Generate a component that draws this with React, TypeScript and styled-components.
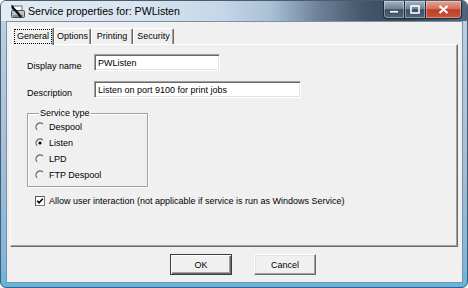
import React from 'react';
import styled, { createGlobalStyle } from 'styled-components';

const GlobalStyle = createGlobalStyle`
  html, body {
    margin: 0;
    padding: 0;
  }
  body {
    width: 468px;
    height: 288px;
    overflow: hidden;
    background: #ffffff;
    font-family: "Liberation Sans", Arial, sans-serif;
  }
`;

// Aero glass frame
const Window = styled.div`
  box-sizing: border-box;
  width: 468px;
  height: 288px;
  display: flex;
  flex-direction: column;
  border: 1px solid #4a5c6e;
  border-radius: 6px;
  overflow: hidden;
  background: linear-gradient(180deg, #bcd2e6 0%, #a2bfd9 55%, #80b6dc 92%, #5cb6e4 100%);
`;

const TitleBar = styled.div`
  height: 20px;
  display: flex;
  align-items: flex-start;
  background: linear-gradient(90deg, #e3ebf3 0%, #d8e4ef 30%, #c3d6e8 48%, #a9bfd4 58%, #6d8299 68%, #43566b 78%, #37475a 88%, #4e6781 100%);
`;

const AppIcon = styled.svg`
  width: 16px;
  height: 16px;
  margin: 3px 2px 0 9px;
  flex-shrink: 0;
`;

const Title = styled.div`
  font-size: 10.6px;
  line-height: 20px;
  color: #000;
  flex: 1;
`;

const CaptionGroup = styled.div`
  display: flex;
  margin-right: 5px;
`;

const CaptionButton = styled.div<{ $w: number; $close?: boolean; $first?: boolean }>`
  box-sizing: border-box;
  width: ${({ $w }) => $w}px;
  height: 18px;
  display: flex;
  align-items: center;
  justify-content: center;
  border: 1px solid #1e2a36;
  border-top: none;
  margin-left: -1px;
  border-radius: ${({ $close, $first }) => ($close ? '0 0 4px 0' : $first ? '0 0 0 4px' : '0')};
  box-shadow: inset 0 0 0 1px rgba(255, 255, 255, 0.35);
  background: ${({ $close }) =>
    $close
      ? 'linear-gradient(180deg, #e6a594 0%, #d2705a 45%, #bd3f25 52%, #c8553a 100%)'
      : 'linear-gradient(180deg, #a4b3c4 0%, #6f8298 45%, #3c4e62 52%, #50667e 100%)'};
`;

const Client = styled.div`
  flex: 1;
  margin: 0 4px 4px 5px;
  background: #f0f0f0;
  border: 1px solid #7d8fa2;
  display: flex;
  flex-direction: column;
  font-size: 9px;
  color: #000;
`;

const TabStrip = styled.div`
  display: flex;
  align-items: flex-end;
  padding: 5px 0 0 5px;
`;

const Tab = styled.div<{ $w: number; $active?: boolean }>`
  box-sizing: border-box;
  width: ${({ $w }) => $w}px;
  height: ${({ $active }) => ($active ? 18 : 16)}px;
  margin-bottom: ${({ $active }) => ($active ? -1 : 0)}px;
  position: relative;
  z-index: ${({ $active }) => ($active ? 1 : 0)};
  display: flex;
  align-items: center;
  justify-content: center;
  background: #f0f0f0;
  border: 1px solid;
  border-color: #ffffff #696969 transparent #ffffff;
  border-bottom: none;
  border-radius: 2px 2px 0 0;
  box-shadow: inset -1px 0 #a0a0a0;
`;

const FocusText = styled.span<{ $focus?: boolean }>`
  padding: 1px 2px;
  outline: ${({ $focus }) => ($focus ? '1px dotted #000' : 'none')};
  line-height: 11px;
`;

const Panel = styled.div`
  box-sizing: border-box;
  height: 203px;
  margin: 0 4px 0 3px;
  border: 1px solid;
  border-color: #ffffff #696969 #696969 #ffffff;
  box-shadow: inset -1px -1px #a0a0a0;
  padding: 9px 0 0 16px;
  display: flex;
  flex-direction: column;
`;

const FieldRow = styled.div<{ $gap?: number }>`
  display: flex;
  align-items: flex-start;
  margin-top: ${({ $gap }) => $gap ?? 0}px;
`;

const FieldLabel = styled.div`
  width: 67px;
  padding-top: 6px;
  line-height: 12px;
`;

const TextBox = styled.div<{ $w: number }>`
  box-sizing: border-box;
  width: ${({ $w }) => $w}px;
  height: 17px;
  padding: 2px 3px;
  line-height: 12px;
  background: #ffffff;
  border: 1px solid;
  border-color: #a0a0a0 #ffffff #ffffff #a0a0a0;
  box-shadow: inset 1px 1px #696969, inset -1px -1px #e3e3e3;
`;

const GroupBox = styled.fieldset`
  box-sizing: border-box;
  width: 121px;
  margin: 8px 0 0 0;
  padding: 0 0 3px 7px;
  min-inline-size: 0;
  border: 1px solid #a0a0a0;
  box-shadow: inset 1px 1px #ffffff, 1px 1px #ffffff;
  display: flex;
  flex-direction: column;
`;

const GroupLegend = styled.legend`
  padding: 0 1px;
  margin-left: 4px;
  line-height: 12px;
`;

const OptionRow = styled.div<{ $gap?: number }>`
  display: flex;
  align-items: center;
  height: 16px;
  gap: 4px;
  margin-top: ${({ $gap }) => $gap ?? 0}px;
`;

const CheckRow = styled(OptionRow)`
  margin-left: 8px;
`;

const Footer = styled.div`
  display: flex;
  justify-content: center;
  gap: 22px;
  padding: 7px 0 0 17px;
`;

const PushButton = styled.div<{ $default?: boolean }>`
  box-sizing: border-box;
  width: 62px;
  height: 21px;
  display: flex;
  align-items: center;
  justify-content: center;
  background: #f0f0f0;
  border: 1px solid;
  border-color: ${({ $default }) => ($default ? '#3c3c3c' : '#ffffff #696969 #696969 #ffffff')};
  box-shadow: ${({ $default }) =>
    $default
      ? 'inset 1px 1px #ffffff, inset -1px -1px #696969, inset -2px -2px #a0a0a0'
      : 'inset -1px -1px #a0a0a0, inset 1px 1px #e3e3e3'};
`;

const Radio = ({ checked }: { checked?: boolean }) => (
  <svg width="10" height="10" viewBox="0 0 10 10">
    <circle cx="5" cy="5" r="4" fill="#f4f4f4" />
    <path d="M2.17 7.83 A4 4 0 0 1 7.83 2.17" fill="none" stroke="#6a6a6a" strokeWidth="1.3" />
    <path d="M7.83 2.17 A4 4 0 0 1 2.17 7.83" fill="none" stroke="#e4e4e4" strokeWidth="1" />
    {checked && <circle cx="5" cy="5" r="1.6" fill="#000" />}
  </svg>
);

const CheckBox = () => (
  <svg width="10" height="10" viewBox="0 0 10 10">
    <rect x="0.5" y="0.5" width="9" height="9" fill="#ffffff" stroke="#7a7a7a" />
    <path d="M0.5 9.5 V0.5 H9.5" fill="none" stroke="#5a5a5a" />
    <polyline points="2.2,4.8 4,6.8 7.8,2.8" fill="none" stroke="#000" strokeWidth="1.6" />
  </svg>
);

const tabs = [
  { name: 'General', w: 42 },
  { name: 'Options', w: 37 },
  { name: 'Printing', w: 42 },
  { name: 'Security', w: 41 },
];

const serviceTypes = ['Despool', 'Listen', 'LPD', 'FTP Despool'];

export default function App() {
  return (
    <>
      <GlobalStyle />
      <Window>
        <TitleBar>
          <AppIcon viewBox="0 0 16 16">
            <rect x="3" y="2" width="9" height="5" fill="#ffffff" stroke="#6b6b6b" />
            <rect x="1.5" y="6.5" width="13" height="7" rx="1" fill="#b9c2c8" stroke="#4a4f55" />
            <rect x="3" y="11" width="10" height="2" fill="#7d8a94" />
            <path d="M2 3 L6 7 L11 13" fill="none" stroke="#111" strokeWidth="2.4" />
            <path d="M1 1 L4 2 L2 4 Z" fill="#111" />
          </AppIcon>
          <Title>Service properties for: PWListen</Title>
          <CaptionGroup>
            <CaptionButton $w={22} $first>
              <svg width="10" height="8" viewBox="0 0 10 8">
                <rect x="0.5" y="4.5" width="9" height="2.5" fill="#fff" stroke="#394a5c" strokeWidth="0.8" />
              </svg>
            </CaptionButton>
            <CaptionButton $w={22}>
              <svg width="10" height="9" viewBox="0 0 10 9">
                <rect x="1" y="1" width="8" height="7" fill="none" stroke="#fff" strokeWidth="1.6" />
              </svg>
            </CaptionButton>
            <CaptionButton $w={37} $close>
              <svg width="11" height="9" viewBox="0 0 11 9">
                <path d="M1.5 1 L9.5 8 M9.5 1 L1.5 8" stroke="#fff" strokeWidth="2.2" />
              </svg>
            </CaptionButton>
          </CaptionGroup>
        </TitleBar>
        <Client>
          <TabStrip>
            {tabs.map((t, i) => (
              <Tab key={t.name} $w={t.w} $active={i === 0}>
                <FocusText $focus={i === 0}>{t.name}</FocusText>
              </Tab>
            ))}
          </TabStrip>
          <Panel>
            <FieldRow>
              <FieldLabel>Display name</FieldLabel>
              <TextBox $w={126}>PWListen</TextBox>
            </FieldRow>
            <FieldRow $gap={9}>
              <FieldLabel>Description</FieldLabel>
              <TextBox $w={207}>Listen on port 9100 for print jobs</TextBox>
            </FieldRow>
            <GroupBox>
              <GroupLegend>Service type</GroupLegend>
              {serviceTypes.map((name) => (
                <OptionRow key={name}>
                  <Radio checked={name === 'Listen'} />
                  <span>{name}</span>
                </OptionRow>
              ))}
            </GroupBox>
            <CheckRow $gap={6}>
              <CheckBox />
              <span>Allow user interaction (not applicable if service is run as Windows Service)</span>
            </CheckRow>
          </Panel>
          <Footer>
            <PushButton $default>OK</PushButton>
            <PushButton>Cancel</PushButton>
          </Footer>
        </Client>
      </Window>
    </>
  );
}
